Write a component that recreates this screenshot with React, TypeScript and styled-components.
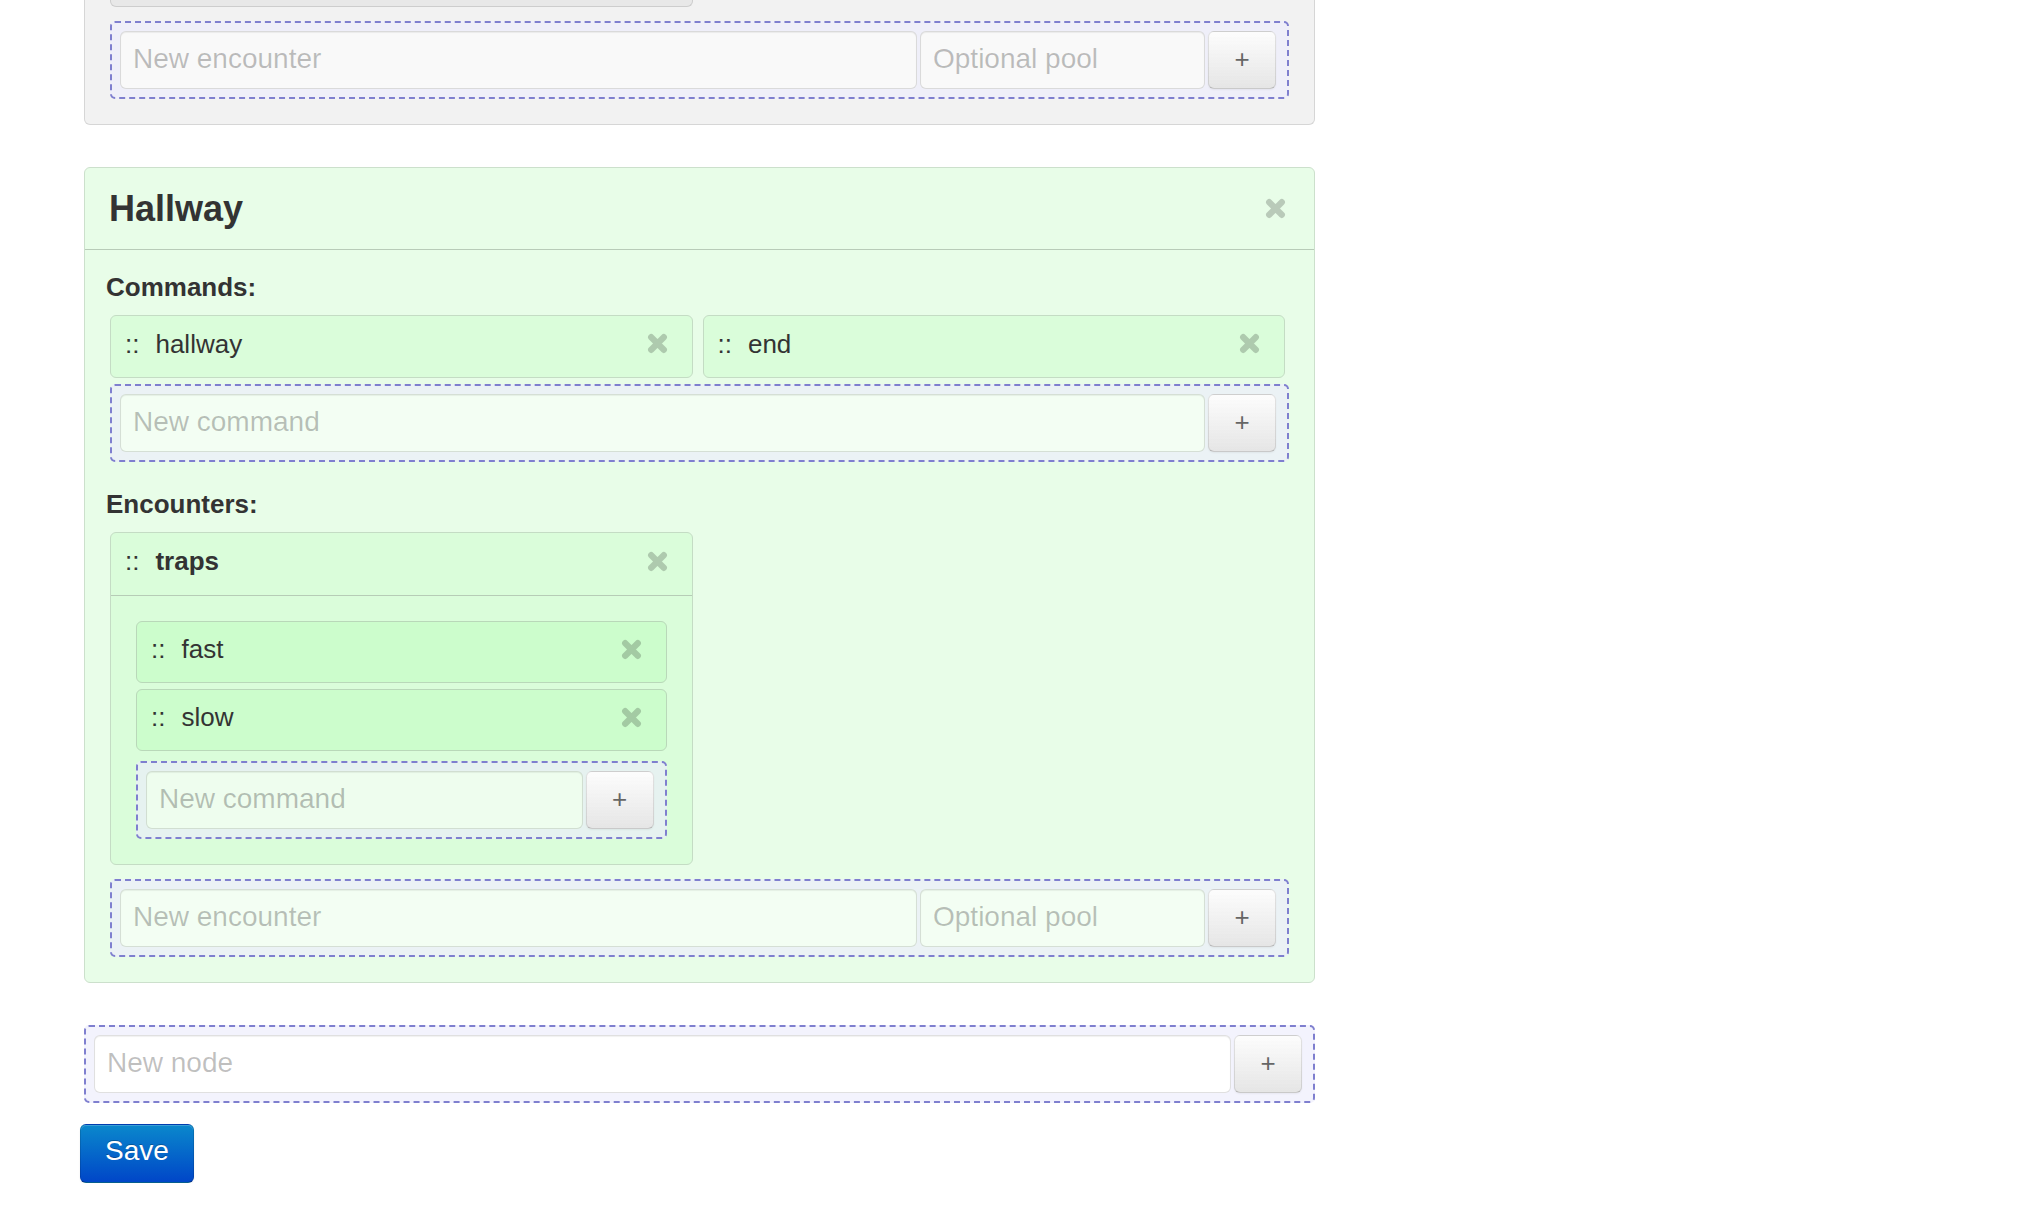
import React from 'react';
import styled, { createGlobalStyle } from 'styled-components';

const GlobalStyle = createGlobalStyle`
  html, body { margin: 0; padding: 0; background: #ffffff; }
  body {
    font-family: "Liberation Sans", Arial, Helvetica, sans-serif;
    font-size: 26px;
    color: #333333;
  }
  *, *::before, *::after { box-sizing: border-box; }
`;

type Tone = 'gray' | 'green';

const Page = styled.main`
  width: 1231px;
  margin-left: 84px;
  display: flex;
  flex-direction: column;
`;

const Panel = styled.section<{ $tone: Tone; $cut?: boolean }>`
  background: ${(p) => (p.$tone === 'gray' ? '#f2f2f2' : '#e8fde8')};
  border: 1px solid ${(p) => (p.$tone === 'gray' ? '#d6d6d6' : '#cce0cc')};
  border-radius: 6px;
  margin-bottom: 42px;
  ${(p) =>
    p.$cut &&
    `border-top: none; border-top-left-radius: 0; border-top-right-radius: 0;`}
`;

const PanelHeader = styled.header`
  display: flex;
  align-items: center;
  justify-content: space-between;
  height: 82px;
  padding: 0 28px 0 24px;
  border-bottom: 1px solid #b8cbb8;
`;

const Title = styled.h3`
  margin: 0;
  font-size: 36px;
  line-height: 41px;
  font-weight: bold;
  color: #333333;
`;

const PanelBody = styled.div<{ $top: number }>`
  display: flex;
  flex-direction: column;
  padding: ${(p) => p.$top}px 25px 25px;
`;

const Section = styled.div`
  display: flex;
  flex-direction: column;
  & + & {
    margin-top: 27px;
  }
`;

const SectionLabel = styled.h4`
  margin: 0 0 13px -4px;
  font-size: 26px;
  line-height: 30px;
  font-weight: bold;
  color: #333333;
`;

const ItemGrid = styled.div<{ $after: number }>`
  display: grid;
  grid-template-columns: 1fr 1fr;
  gap: 6px 10px;
  margin: 0 4px ${(p) => p.$after}px 0;
`;

const ItemStack = styled.div`
  display: flex;
  flex-direction: column;
  gap: 6px;
  margin-bottom: 10px;
`;

const Item = styled.div<{ $bg: string; $line: string; $h: number }>`
  display: flex;
  align-items: center;
  height: ${(p) => p.$h}px;
  padding: 0 24px 6px 14px;
  background: ${(p) => p.$bg};
  border: 1px solid ${(p) => p.$line};
  border-radius: 6px;
  line-height: 30px;
`;

const Handle = styled.span`
  margin-right: 16px;
  color: #333333;
`;

const ItemText = styled.span<{ $bold?: boolean }>`
  font-weight: ${(p) => (p.$bold ? 'bold' : 'normal')};
  color: #333333;
`;

const CloseWrap = styled.span`
  margin-left: auto;
  display: flex;
  color: rgba(0, 0, 0, 0.2);
`;

const EncounterBox = styled.div`
  background: #dafdda;
  border: 1px solid #c4dcc4;
  border-radius: 6px;
`;

const EncounterHeader = styled.div`
  display: flex;
  align-items: center;
  height: 63px;
  padding: 0 24px 6px 14px;
  border-bottom: 1px solid #b6ccb6;
  line-height: 30px;
`;

const EncounterBody = styled.div`
  display: flex;
  flex-direction: column;
  padding: 25px;
`;

const CutItem = styled.div`
  height: 7px;
  background: #e8e8e8;
  border: 1px solid #cdcdcd;
  border-top: none;
  border-radius: 0 0 6px 6px;
`;

const AddBox = styled.div<{ $field: string }>`
  --field-bg: ${(p) => p.$field};
  display: flex;
  gap: 3px;
  padding: 8px 11px 8px 8px;
  border: 2px dashed #7f7fcf;
  border-radius: 5px;
  background: rgba(237, 237, 252, 0.65);
`;

const Field = styled.input<{ $w?: number }>`
  flex: ${(p) => (p.$w ? `0 0 ${p.$w}px` : '1 1 auto')};
  min-width: 0;
  height: 58px;
  padding: 0 12px 2px;
  font-family: inherit;
  font-size: 28px;
  color: #555555;
  background: var(--field-bg);
  border: 1px solid rgba(0, 0, 0, 0.12);
  border-radius: 6px;
  box-shadow: inset 0 1px 1px rgba(0, 0, 0, 0.06);
  outline: none;
  &::placeholder {
    color: rgba(0, 0, 0, 0.25);
    opacity: 1;
  }
`;

const AddButton = styled.button`
  flex: 0 0 68px;
  height: 58px;
  padding: 0 0 2px;
  font-family: inherit;
  font-size: 26px;
  line-height: 1;
  color: #666666;
  background-image: linear-gradient(
    to bottom,
    rgba(255, 255, 255, 0.85),
    rgba(0, 0, 0, 0.04)
  );
  border: 1px solid rgba(0, 0, 0, 0.1);
  border-bottom-color: rgba(0, 0, 0, 0.2);
  border-radius: 6px;
  box-shadow: inset 0 1px 0 rgba(255, 255, 255, 0.2),
    0 1px 2px rgba(0, 0, 0, 0.05);
  cursor: pointer;
`;

const SaveButton = styled.button`
  align-self: flex-start;
  margin: 21px 0 0 -4px;
  width: 114px;
  height: 59px;
  padding: 0 0 5px;
  font-family: inherit;
  font-size: 28px;
  color: #ffffff;
  text-shadow: 0 -1px 0 rgba(0, 0, 0, 0.25);
  background-color: #0055cc;
  background-image: linear-gradient(to bottom, #0a88cc, #0046c8);
  border: 1px solid rgba(0, 0, 0, 0.12);
  border-bottom-color: rgba(0, 0, 0, 0.3);
  border-radius: 6px;
  box-shadow: inset 0 1px 0 rgba(255, 255, 255, 0.2),
    0 1px 2px rgba(0, 0, 0, 0.08);
  cursor: pointer;
`;

const CloseIcon: React.FC = () => (
  <CloseWrap>
    <svg width="21" height="21" viewBox="0 0 20 20" aria-hidden="true">
      <path
        d="M4 4 L16 16 M16 4 L4 16"
        stroke="currentColor"
        strokeWidth="6"
        strokeLinecap="round"
        fill="none"
      />
    </svg>
  </CloseWrap>
);

const AddRow: React.FC<{ field: string; placeholder: string; pool?: boolean }> = ({
  field,
  placeholder,
  pool,
}) => (
  <AddBox $field={field}>
    <Field placeholder={placeholder} />
    {pool && <Field $w={285} placeholder="Optional pool" />}
    <AddButton type="button">+</AddButton>
  </AddBox>
);

const CommandItem: React.FC<{ label: string; nested?: boolean }> = ({ label, nested }) => (
  <Item
    $h={nested ? 62 : 63}
    $bg={nested ? '#ccfdcc' : '#dafdda'}
    $line={nested ? '#b9d8b9' : '#c4dcc4'}
  >
    <Handle>::</Handle>
    <ItemText>{label}</ItemText>
    <CloseIcon />
  </Item>
);

export default function App() {
  return (
    <>
      <GlobalStyle />
      <Page>
        <Panel $tone="gray" $cut>
          <PanelBody $top={0}>
            <ItemGrid $after={14}>
              <CutItem />
            </ItemGrid>
            <AddRow field="#f9f9f9" placeholder="New encounter" pool />
          </PanelBody>
        </Panel>

        <Panel $tone="green">
          <PanelHeader>
            <Title>Hallway</Title>
            <CloseIcon />
          </PanelHeader>
          <PanelBody $top={22}>
            <Section>
              <SectionLabel>Commands:</SectionLabel>
              <ItemGrid $after={6}>
                <CommandItem label="hallway" />
                <CommandItem label="end" />
              </ItemGrid>
              <AddRow field="#f3fef3" placeholder="New command" />
            </Section>
            <Section>
              <SectionLabel>Encounters:</SectionLabel>
              <ItemGrid $after={14}>
                <EncounterBox>
                  <EncounterHeader>
                    <Handle>::</Handle>
                    <ItemText $bold>traps</ItemText>
                    <CloseIcon />
                  </EncounterHeader>
                  <EncounterBody>
                    <ItemStack>
                      <CommandItem label="fast" nested />
                      <CommandItem label="slow" nested />
                    </ItemStack>
                    <AddRow field="#eefdee" placeholder="New command" />
                  </EncounterBody>
                </EncounterBox>
              </ItemGrid>
              <AddRow field="#f3fef3" placeholder="New encounter" pool />
            </Section>
          </PanelBody>
        </Panel>

        <AddRow field="#ffffff" placeholder="New node" />
        <SaveButton type="button">Save</SaveButton>
      </Page>
    </>
  );
}
